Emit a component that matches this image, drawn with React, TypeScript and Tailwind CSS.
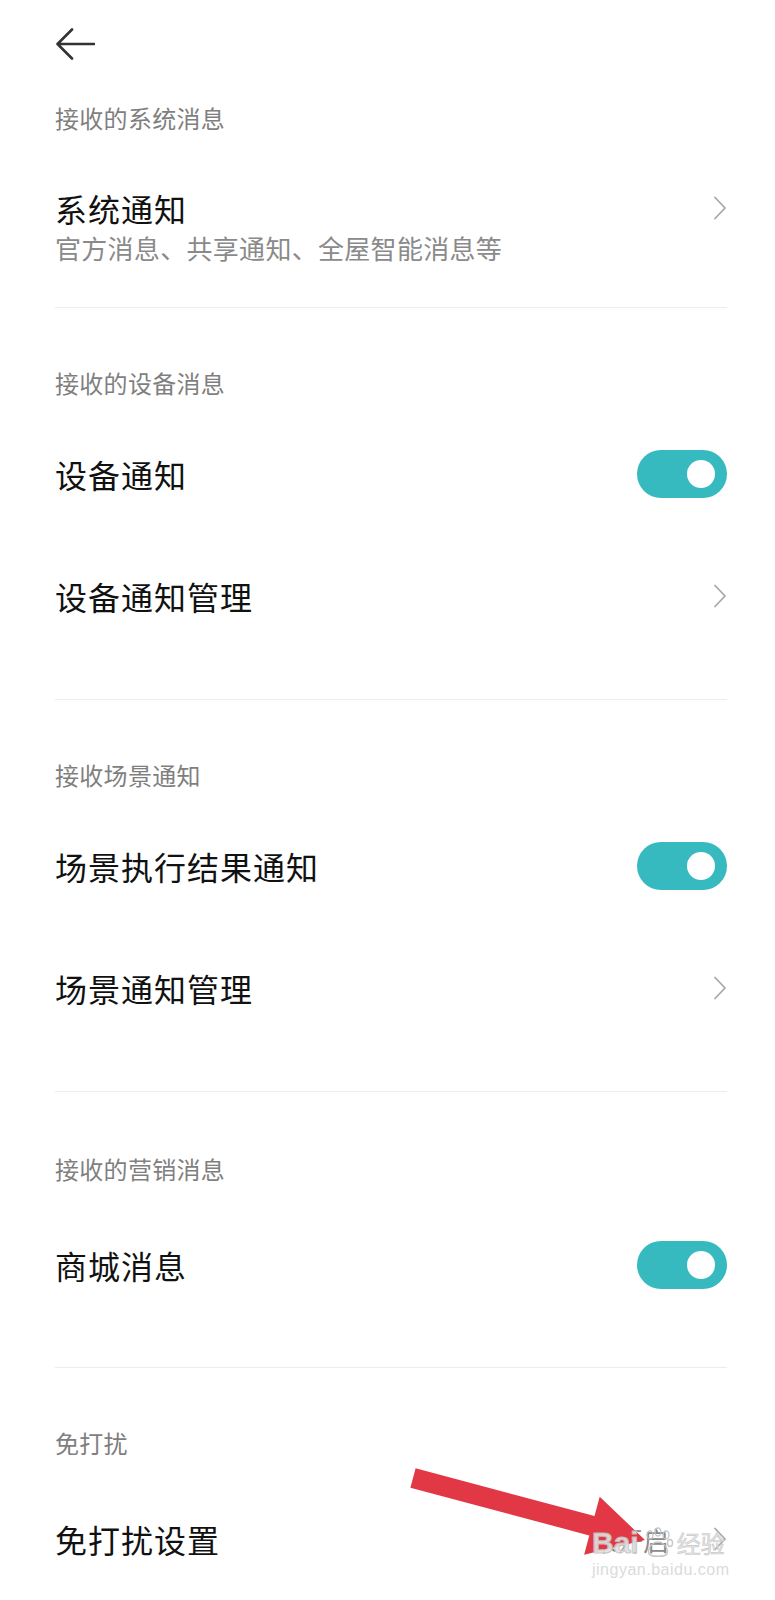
import type { ReactNode } from "react";

const font = { fontFamily: '"Noto Sans CJK SC", "Noto Sans", sans-serif' };

function Chevron() {
  return (
    <svg width="14" height="24" viewBox="0 0 14 24" fill="none" className="shrink-0">
      <path d="M2 1.5 L12 12 L2 22.5" stroke="#a8a8a8" strokeWidth="1.8" strokeLinecap="round" strokeLinejoin="round" />
    </svg>
  );
}

function Toggle() {
  return (
    <div className="flex h-[48px] w-[90px] shrink-0 items-center justify-end rounded-full bg-[#36b9bf] pr-[12px]">
      <div className="h-[28px] w-[28px] rounded-full bg-white" />
    </div>
  );
}

function SectionHeader({ children, className = "" }: { children: ReactNode; className?: string }) {
  return (
    <div className={`flex h-[60px] items-center text-[24px] tracking-[0.3px] text-[#7f7f7f] ${className}`}>
      {children}
    </div>
  );
}

function Row({
  title,
  right,
  tall = false,
}: {
  title: string;
  right: ReactNode;
  tall?: boolean;
}) {
  return (
    <div className={`flex items-center justify-between ${tall ? "h-[132px]" : "h-[122px]"}`}>
      <span className="text-[32px] leading-[40px] tracking-[1px] text-[#111]">{title}</span>
      {right}
    </div>
  );
}

function Divider() {
  return <div className="h-px bg-[#ececec]" />;
}

export default function App() {
  return (
    <div className="relative h-[1600px] w-full overflow-hidden bg-white" style={font}>
      <header className="flex h-[88px] items-center pl-[55px]">
        <svg width="40" height="32" viewBox="0 0 40 32" fill="none">
          <path d="M39 16 H2.5 M17 1.5 L2.5 16 L17 30.5" stroke="#333" strokeWidth="2.6" strokeLinecap="round" strokeLinejoin="round" />
        </svg>
      </header>

      <main className="pl-[55px] pr-[48px]">
        <SectionHeader>接收的系统消息</SectionHeader>
        <div className="flex items-start justify-between pt-[40px] pb-[41px]">
          <div className="min-w-0">
            <p className="text-[32px] leading-[40px] tracking-[1px] text-[#111]">系统通知</p>
            <p className="mt-[2px] text-[26px] leading-[36px] tracking-[0.3px] text-[#8a8a8a]">
              官方消息、共享通知、全屋智能消息等
            </p>
          </div>
          <div className="mt-[8px]">
            <Chevron />
          </div>
        </div>
        <Divider />

        <SectionHeader className="mt-[45px]">接收的设备消息</SectionHeader>
        <Row title="设备通知" right={<Toggle />} />
        <Row title="设备通知管理" right={<Chevron />} />
        <div className="h-[42px]" />
        <Divider />

        <SectionHeader className="mt-[45px]">接收场景通知</SectionHeader>
        <Row title="场景执行结果通知" right={<Toggle />} />
        <Row title="场景通知管理" right={<Chevron />} />
        <div className="h-[42px]" />
        <Divider />

        <SectionHeader className="mt-[47px]">接收的营销消息</SectionHeader>
        <Row title="商城消息" right={<Toggle />} tall />
        <div className="h-[36px]" />
        <Divider />

        <SectionHeader className="mt-[45px]">免打扰</SectionHeader>
        <Row
          title="免打扰设置"
          tall
          right={
            <div className="flex items-center gap-[44px]">
              <span className="text-[26px] text-[#8a8a8a]">未开启</span>
              <Chevron />
            </div>
          }
        />
      </main>

      {/* annotation arrow over the last row */}
      <svg className="pointer-events-none absolute left-0 top-0" width="775" height="1600">
        <polygon
          points="415.6,1468.3 594.5,1516 599.7,1496.7 645,1540 584.1,1554.7 589.3,1535.4 410.4,1487.7"
          fill="#e23845"
        />
      </svg>

      {/* watermark */}
      <div className="pointer-events-none absolute left-[592px] top-[1526px] flex flex-col items-start opacity-90">
        <div className="flex items-center">
          <span
            className="text-[30px] font-bold leading-[34px] text-[#e2e2e2]"
            style={{ fontFamily: '"Liberation Sans", Arial, sans-serif', WebkitTextStroke: "1px #c4c4c4" }}
          >
            Bai
          </span>
          <svg width="34" height="34" viewBox="0 0 34 34" fill="none" className="mx-[2px]">
            <g stroke="#c2c2c2" strokeWidth="1.4">
              <ellipse cx="9" cy="9" rx="3" ry="4" />
              <ellipse cx="17" cy="6" rx="3" ry="4" />
              <ellipse cx="25" cy="9" rx="3" ry="4" />
              <ellipse cx="29" cy="17" rx="2.5" ry="3.5" />
              <path d="M8 28 C6 22 12 16 17 16 C22 16 28 22 26 28 C24 31 10 31 8 28 Z" />
            </g>
          </svg>
          <span className="text-[24px] leading-[34px] text-[#e2e2e2]" style={{ WebkitTextStroke: "0.6px #c4c4c4" }}>
            经验
          </span>
        </div>
        <span
          className="text-[16px] leading-[20px] tracking-[0.5px] text-[#d8d8d8]"
          style={{ fontFamily: '"Liberation Sans", Arial, sans-serif' }}
        >
          jingyan.baidu.com
        </span>
      </div>
    </div>
  );
}
